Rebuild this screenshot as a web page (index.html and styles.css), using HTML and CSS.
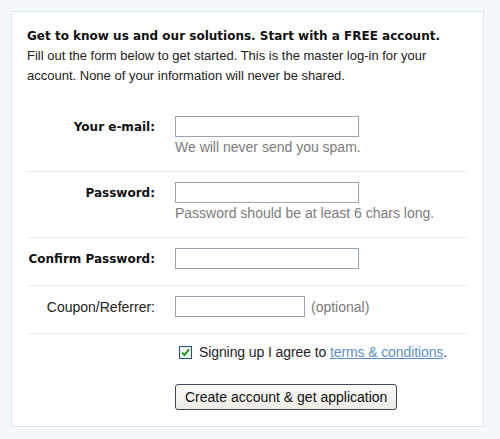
FILE: index.html
```html
<!DOCTYPE html>
<html>
<head>
<meta charset="utf-8">
<link rel="stylesheet" href="styles.css">
</head>
<body>
<div class="box">
  <div class="intro">
    <div class="intro-title">Get to know us and our solutions. Start with a FREE account.</div>
    <div class="intro-text">Fill out the form below to get started. This is the master log-in for your account. None of your information will never be shared.</div>
  </div>
  <div class="row">
    <div class="label strong">Your e-mail:</div>
    <div class="field">
      <input class="input" type="text">
      <div class="hint">We will never send you spam.</div>
    </div>
  </div>
  <div class="row">
    <div class="label strong">Password:</div>
    <div class="field">
      <input class="input" type="password">
      <div class="hint">Password should be at least 6 chars long.</div>
    </div>
  </div>
  <div class="row plain">
    <div class="label strong">Confirm Password:</div>
    <div class="field">
      <input class="input" type="password">
    </div>
  </div>
  <div class="row plain">
    <div class="label">Coupon/Referrer:</div>
    <div class="field inline">
      <input class="input short" type="text">
      <span class="hint">(optional)</span>
    </div>
  </div>
  <div class="agree">
    <span class="check"><svg width="9" height="9" viewBox="0 0 9 9"><path d="M1 4.5 L3.5 7 L8 1.5" fill="none" stroke="#22a12a" stroke-width="2"/></svg></span>
    <span>Signing up I agree to <a href="#" class="link">terms &amp; conditions</a>.</span>
  </div>
  <div class="actions">
    <button class="btn">Create account &amp; get application</button>
  </div>
</div>
</body>
</html>
```
FILE: styles.css
```css
html, body {
  margin: 0;
  padding: 0;
}
body {
  background: #f4f9fc;
  padding: 11px;
  font-family: "Liberation Sans", Arial, sans-serif;
  font-size: 13px;
  color: #222;
}
.box {
  width: 441px;
  border: 1px solid #d7e8f2;
  background: #fff;
  padding: 14px 15px 16px;
}
.intro {
  line-height: 20px;
  margin-bottom: 20px;
}
.intro-title {
  font-family: "DejaVu Sans", Verdana, sans-serif;
  font-weight: bold;
  font-size: 12px;
  color: #111;
}
.intro-text {
  color: #222;
}
.row {
  display: grid;
  grid-template-columns: 128px 1fr;
  column-gap: 20px;
  padding: 10px 0 15px;
  border-bottom: 1px solid #ececec;
}
.row.plain {
  padding-bottom: 16px;
}
.label {
  text-align: right;
  height: 21px;
  line-height: 23px;
  font-size: 14px;
  color: #222;
}
.label.strong {
  font-family: "DejaVu Sans", Verdana, sans-serif;
  font-weight: bold;
  font-size: 12px;
  color: #111;
}
.field.inline {
  display: flex;
  align-items: center;
  gap: 6px;
}
.input {
  display: block;
  box-sizing: border-box;
  width: 184px;
  height: 21px;
  margin: 0;
  border: 1px solid #9aa5b1;
  background: #fff;
  padding: 1px 3px;
  font: inherit;
}
.input.short {
  width: 130px;
}
.hint {
  color: #7c7c7c;
  font-size: 14px;
  line-height: 18px;
  margin-top: 1px;
}
.field.inline .hint {
  margin-top: 0;
}
.agree {
  display: flex;
  align-items: center;
  gap: 7px;
  padding: 9px 0 0 152px;
  line-height: 18px;
  font-size: 14px;
  letter-spacing: -0.1px;
}
.check {
  box-sizing: border-box;
  width: 13px;
  height: 13px;
  border: 1px solid #1c5180;
  background: #f2f2ee;
  display: flex;
  align-items: center;
  justify-content: center;
}
.check svg {
  display: block;
}
.link {
  color: #5d8fc7;
  text-decoration: underline;
}
.actions {
  padding: 23px 0 0 148px;
}
.btn {
  box-sizing: border-box;
  height: 26px;
  padding: 0 9px;
  border: 1px solid #3b4656;
  border-radius: 3px;
  background: linear-gradient(#fbfbf9, #ecebe6);
  font-family: "Liberation Sans", Arial, sans-serif;
  font-size: 14px;
  color: #111;
}
```
